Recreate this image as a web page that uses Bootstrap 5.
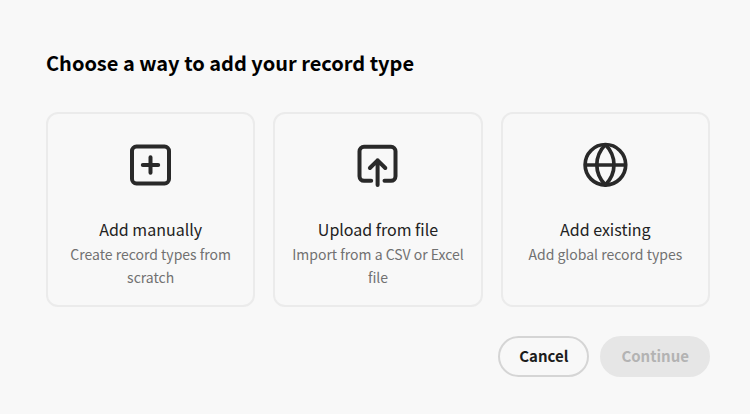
<!DOCTYPE html>
<html lang="en">
<head>
<meta charset="utf-8">
<meta name="viewport" content="width=device-width, initial-scale=1">
<title>Add record type</title>
<link href="https://cdn.jsdelivr.net/npm/bootstrap@5.3.0/dist/css/bootstrap.min.css" rel="stylesheet">
<style>
  body { background: #f8f8f8; font-family: "Noto Sans CJK SC", "Noto Sans", sans-serif; color: #222; }
  .dialog-body { padding: 48px 40px 36px 46px; }
  .dialog-title { font-size: 20px; line-height: 30px; font-weight: 700; color: #000; margin-bottom: 34px; }
  .choices { gap: 18px; margin-bottom: 29px; }
  .choice { flex: 1 1 0; min-width: 180px; background: #f8f8f8; border: 2px solid #ebebeb; border-radius: 12px; padding: 27px 16px 16px; color: #222; }
  .choice:hover { border-color: #d0d0d0; }
  .choice svg { width: 48px; height: 48px; margin-bottom: 27px; }
  .choice-title { font-size: 16px; line-height: 27px; }
  .choice-text { font-size: 14px; line-height: 23px; color: #717171; }
  .actions { gap: 11px; }
  .actions .btn { font-size: 15px; line-height: 25px; font-weight: 700; border-width: 2px; padding: 5px 19px 7px; }
  .btn-cancel { color: #1d1d1d; border-color: #d5d5d5; }
  .btn-continue:disabled { color: #b3b3b3; background: #e6e6e6; border-color: #e6e6e6; opacity: 1; }
</style>
<script src="https://cdn.jsdelivr.net/npm/bootstrap@5.3.0/dist/js/bootstrap.bundle.min.js" defer></script>
</head>
<body>
<main class="dialog-body">
  <h1 class="dialog-title">Choose a way to add your record type</h1>
  <div class="choices d-flex flex-wrap">
    <button type="button" class="choice d-flex flex-column align-items-center">
      <svg viewBox="0 0 48 48" fill="none" stroke="#292929" stroke-width="4" stroke-linecap="round" aria-hidden="true">
        <rect x="5" y="5.500" width="37" height="37" rx="4.500"/>
        <path d="M23.500 16.300v15.400M15.800 24h15.400"/>
      </svg>
      <span class="choice-title">Add manually</span>
      <span class="choice-text">Create record types from scratch</span>
    </button>
    <button type="button" class="choice d-flex flex-column align-items-center">
      <svg viewBox="0 0 48 48" fill="none" stroke="#292929" stroke-width="4" stroke-linecap="round" stroke-linejoin="round" aria-hidden="true">
        <path d="M17.200 39.800H10a4.500 4.500 0 0 1-4.500-4.500V10.300A4.500 4.500 0 0 1 10 5.800h27a4.500 4.500 0 0 1 4.500 4.500v25a4.500 4.500 0 0 1-4.500 4.500H30.500"/>
        <path d="M23.600 44V19.300M15.900 27l7.700-7.700 7.700 7.700"/>
      </svg>
      <span class="choice-title">Upload from file</span>
      <span class="choice-text">Import from a CSV or Excel file</span>
    </button>
    <button type="button" class="choice d-flex flex-column align-items-center">
      <svg viewBox="0 0 48 48" fill="none" stroke="#292929" stroke-width="3.700" stroke-linejoin="bevel" aria-hidden="true">
        <circle cx="24.400" cy="23.800" r="20.300"/>
        <path d="M4.100 24h40.600M24.400 3.500c-4.800 5-8.600 12-8.600 20.300s3.800 15.300 8.600 20.300c4.800-5 8.600-12 8.600-20.300s-3.800-15.300-8.600-20.300z"/>
      </svg>
      <span class="choice-title">Add existing</span>
      <span class="choice-text">Add global record types</span>
    </button>
  </div>
  <div class="actions d-flex justify-content-end">
    <button type="button" class="btn btn-cancel rounded-pill">Cancel</button>
    <button type="button" class="btn btn-continue rounded-pill" disabled>Continue</button>
  </div>
</main>
</body>
</html>
